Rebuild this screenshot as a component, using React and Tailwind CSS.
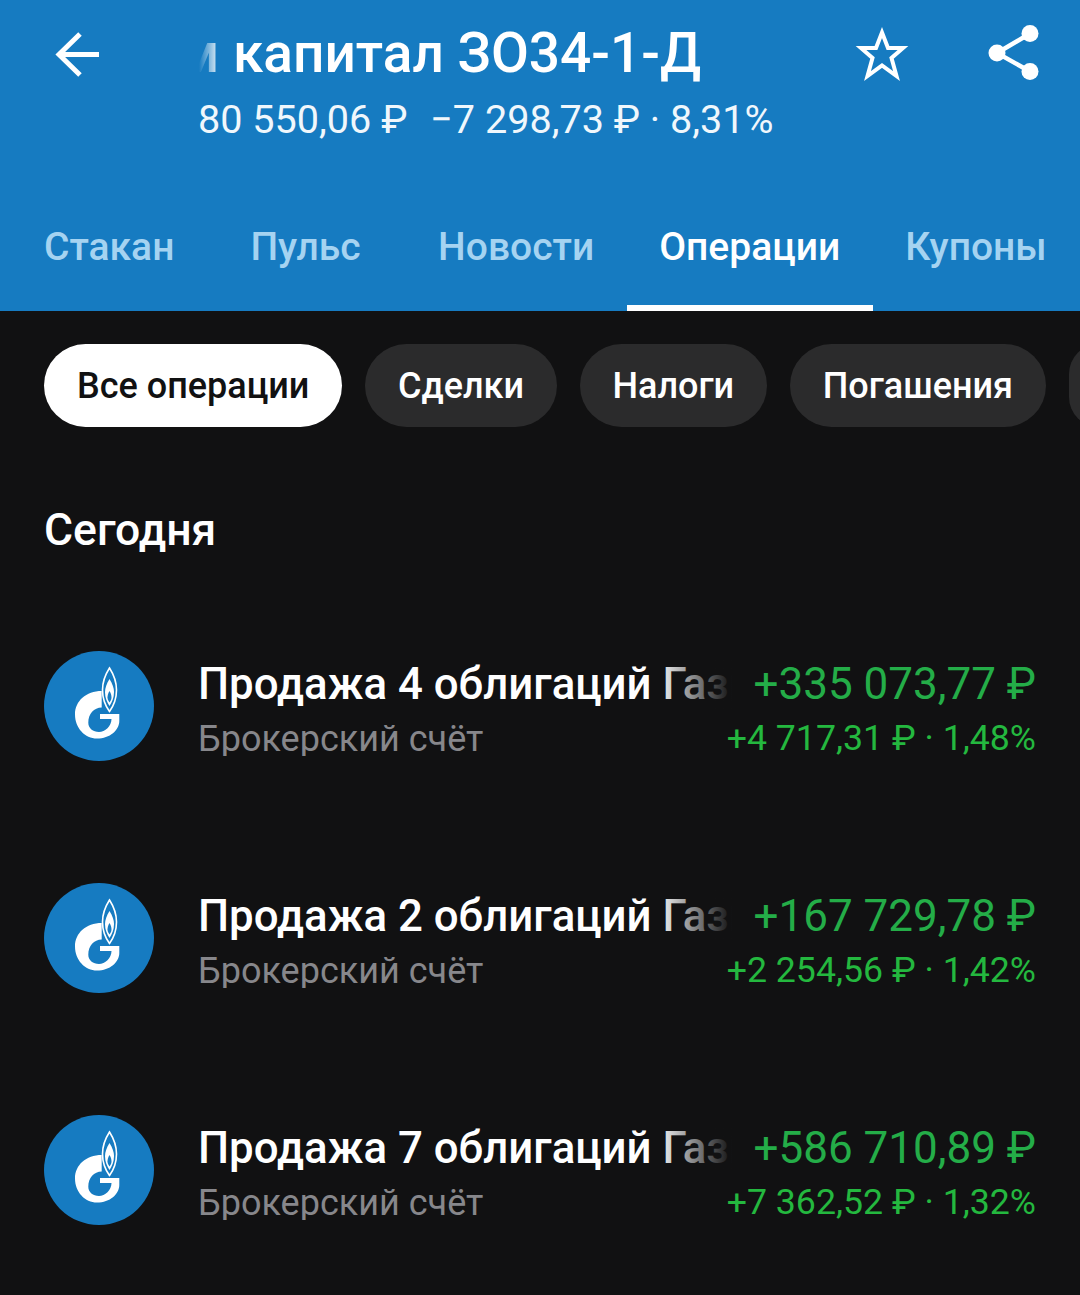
import React from 'react';

// the tab row has uneven spacing in the picture, so each tab carries its own margin
const tabs = [
    { label: 'Стакан', spacing: 'mr-[11px]' },
    { label: 'Пульс', spacing: 'mr-[12.5px]' },
    { label: 'Новости', spacing: '' },
    { label: 'Операции', spacing: '' },
    { label: 'Купоны', spacing: '' },
];
const chips = ['Все операции', 'Сделки', 'Налоги', 'Погашения'];
const operations = [
    { title: 'Продажа 4 облигаций Газпром капитал', amount: '+335 073,77 ₽', profit: '+4 717,31 ₽ · 1,48%' },
    { title: 'Продажа 2 облигаций Газпром капитал', amount: '+167 729,78 ₽', profit: '+2 254,56 ₽ · 1,42%' },
    { title: 'Продажа 7 облигаций Газпром капитал', amount: '+586 710,89 ₽', profit: '+7 362,52 ₽ · 1,32%' },
];

const GasLogo = () => (
    <svg viewBox="0 0 110 110" className="w-[110px] h-[110px] shrink-0">
        <circle cx="55" cy="55" r="55" fill="#167bc1" />
        <path
            fill="#fff"
            d="M57.7 40C42 40 31 50 31 63.5C31 77 41 87.6 53 87.6C66 87.6 75.3 79 75.3 70L75.3 63L56 63L56 68L67.5 68C67.5 75 61 81 55 81C49 81 44.3 77 44.3 71.7C44.3 63 50 56.6 57.7 56.6Z"
        />
        <path
            fill="none"
            stroke="#fff"
            strokeWidth="1.6"
            d="M65.5 17C61 24 58.5 31 58.5 39C58.5 48 61.5 55 65.5 60.5C69.5 55 72.5 48 72.5 39C72.5 31 70 24 65.5 17Z"
        />
        <path
            fill="#fff"
            d="M65.5 28C62.5 33 61 37 61 41C61 47 63 51 65.5 55C68 51 70 47 70 41C70 37 68.5 33 65.5 28Z"
        />
        <path fill="#167bc1" d="M65.5 40C64 42.5 63.5 44.5 63.5 46.5C63.5 48.5 64.5 50 65.5 51.5C66.5 50 67.5 48.5 67.5 46.5C67.5 44.5 67 42.5 65.5 40Z" />
    </svg>
);

const App = () => {
    return (
        <div className="w-[1080px] h-[1295px] overflow-hidden bg-[#111112] font-['Roboto',sans-serif]">
            <header className="h-[311px] bg-[#167bc1] flex flex-col justify-between">
                <div className="flex pt-[22px] pl-[45px]">
                    <svg viewBox="0 0 60 60" className="w-[60px] h-[60px] shrink-0">
                        <path fill="none" stroke="#fff" strokeWidth="5" d="M54 32.5H15M35 12L14 32.5L35 53" />
                    </svg>
                    <div className="ml-[94px] w-[656px] shrink-0">
                        <div className="relative h-[62px] overflow-hidden">
                            <div className="whitespace-nowrap text-[55px] leading-[62px] font-medium text-white -ml-[21px]">
                                м капитал ЗО34-1-Д
                            </div>
                            <div className="absolute inset-y-0 left-0 w-[22px] bg-gradient-to-r from-[#167bc1] to-transparent" />
                        </div>
                        <div className="mt-[14px] -ml-[1px] whitespace-nowrap text-[39.6px] leading-[44px] text-[#f0f7fc]">
                            80 550,06 ₽ <span className="ml-[13px]">−7 298,73 ₽ · 8,31%</span>
                        </div>
                    </div>
                    <svg viewBox="0 0 54 54" className="w-[54px] h-[54px] mt-[5px] shrink-0">
                        <path fill="none" stroke="#fff" strokeWidth="4" d="M27 5.5L33 21L48 21L36.5 31L41.5 49L27 38.5L12.5 49L17.5 31L6 21L21 21Z" />
                    </svg>
                    <svg viewBox="0 0 52 58" className="w-[52px] h-[58px] ml-[79px] mt-[2px] shrink-0">
                        <path fill="none" stroke="#fff" strokeWidth="4.5" d="M42 9.5L9 29L42 47.5" />
                        <circle cx="42" cy="9.5" r="8.5" fill="#fff" />
                        <circle cx="9" cy="29" r="8.5" fill="#fff" />
                        <circle cx="42" cy="47.5" r="8.5" fill="#fff" />
                    </svg>
                </div>
                <nav className="flex pl-[11.5px]">
                    {tabs.map((tab) => (
                        <div
                            key={tab.label}
                            className={`px-[32.5px] pb-[37px] border-b-[6px] text-[39px] leading-[42px] font-medium whitespace-nowrap ${tab.spacing} ${
                                tab.label === 'Операции' ? 'text-white border-white' : 'text-[#a5d3f1] border-transparent'
                            }`}
                        >
                            {tab.label}
                        </div>
                    ))}
                </nav>
            </header>

            <div className="flex gap-[22.5px] pt-[33px] pl-[44px] w-[1200px]">
                {chips.map((chip, i) => (
                    <div
                        key={chip}
                        className={`h-[83px] px-[33px] rounded-full flex items-center text-[36px] font-medium whitespace-nowrap ${
                            i === 0 ? 'bg-white text-[#111112]' : 'bg-[#2b2b2c] text-white'
                        }`}
                    >
                        {chip}
                    </div>
                ))}
                <div className="h-[83px] w-[60px] rounded-full bg-[#2b2b2c]" />
            </div>

            <h2 className="mt-[79px] ml-[44px] text-[44.5px] leading-[48px] font-medium text-white">Сегодня</h2>

            <div className="mt-[97px] flex flex-col gap-[122px] pl-[44px] pr-[44px]">
                {operations.map((op) => (
                    <div key={op.title} className="flex items-center h-[110px]">
                        <GasLogo />
                        <div className="relative ml-[44px] w-[534px] -mr-[10px] shrink-0 overflow-hidden">
                            <div className="whitespace-nowrap pt-[1px] text-[43.8px] leading-[52px] font-medium text-white">{op.title}</div>
                            <div className="mt-[4px] text-[36px] leading-[42px] text-[#87878b] mb-[-4px] pt-[4px]">Брокерский счёт</div>
                            <div className="absolute top-0 right-0 w-[76px] h-[52px] bg-gradient-to-r from-transparent to-[#111112]" />
                        </div>
                        <div className="ml-auto text-right whitespace-nowrap">
                            <div className="pt-[1px] text-[44px] leading-[52px] text-[#24ad48]">{op.amount}</div>
                            <div className="mt-[3px] text-[35.7px] leading-[42px] text-[#24b83f] mb-[-3px] pt-[4px]">{op.profit}</div>
                        </div>
                    </div>
                ))}
            </div>
        </div>
    );
};

export default App;
